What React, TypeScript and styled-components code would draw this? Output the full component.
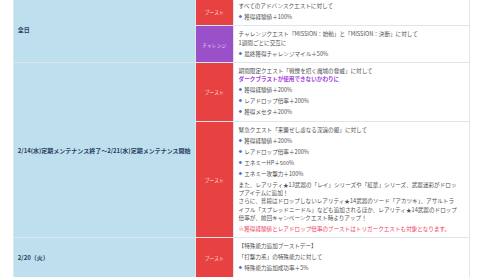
import { FC, ReactNode } from 'react'
import styled, { createGlobalStyle } from 'styled-components'

type Kind = 'boost' | 'challenge'

const GlobalStyle = createGlobalStyle`
  html, body {
    margin: 0;
    padding: 0;
    background: #fff;
    overflow: hidden;
  }
  body {
    font-family: "Noto Sans CJK JP", "Noto Sans", sans-serif;
  }
`

// whole page is drawn at 1/2.5 scale, like the shrunk screenshot
const Page = styled.div`
  zoom: 0.4;
  width: 1200px;
  padding-left: 32px;
  margin-top: -8px;
`

const Table = styled.table`
  width: 1140px;
  table-layout: fixed;
  border-collapse: collapse;

  td {
    border: 3px solid #dfe6ee;
  }
`

const Col = styled.col<{ $w: number }>`
  width: ${(p) => p.$w}px;
`

const DateCell = styled.td`
  background: #bee0ee;
  color: #2b3d5e;
  font-size: 15px;
  font-weight: bold;
  padding: 0 10px;
  vertical-align: middle;
`

const TagCell = styled.td<{ $kind: Kind }>`
  background: ${(p) => (p.$kind === 'boost' ? '#e84142' : '#9a50c9')};
  color: ${(p) => (p.$kind === 'boost' ? '#ffe1e4' : '#eadcf6')};
  font-size: 12px;
  padding: 0;
  text-align: center;
  vertical-align: middle;
  white-space: nowrap;
`

const Detail = styled.td`
  background: #fff;
  color: #505050;
  font-size: 14px;
  line-height: 21px;
  padding: 10px 24px 10px 12px;
  vertical-align: top;
`

const Text = styled.p<{ $gap?: number }>`
  margin: ${(p) => p.$gap ?? 0}px 0 0;
`

const Accent = styled.p`
  margin: 0;
  color: #a23de0;
  font-weight: bold;
`

const Note = styled.p`
  margin: 5px 0 0;
  color: #ee3f60;
`

const List = styled.ul`
  margin: 0;
  padding: 0;
  list-style: none;
`

const Item = styled.li<{ $gap?: number }>`
  margin-top: ${(p) => p.$gap ?? 6.5}px;
  display: flex;
  align-items: center;

  &::before {
    content: '◆';
    color: #4a6fd8;
    font-size: 9px;
    margin-right: 5px;
  }
`

const Tag: FC<{ kind: Kind }> = ({ kind }) => (
  <TagCell $kind={kind}>{kind === 'boost' ? 'ブースト' : 'チャレンジ'}</TagCell>
)

const Bullets: FC<{ items: string[]; gap?: number }> = ({ items, gap }) => (
  <List>
    {items.map((t) => (
      <Item key={t} $gap={gap}>
        {t}
      </Item>
    ))}
  </List>
)

const Row: FC<{ children: ReactNode }> = ({ children }) => <tr>{children}</tr>

const App: FC = () => (
  <>
    <GlobalStyle />
    <Page>
      <Table>
        <colgroup>
          <Col $w={455} />
          <Col $w={95} />
          <Col $w={590} />
        </colgroup>
        <tbody>
          <Row>
            <DateCell rowSpan={2}>全日</DateCell>
            <Tag kind="boost" />
            <Detail>
              <Text>すべてのアドバンスクエストに対して</Text>
              <Bullets items={['獲得経験値＋100%']} />
            </Detail>
          </Row>
          <Row>
            <Tag kind="challenge" />
            <Detail>
              <Text>
                チャレンジクエスト「MISSION：始動」と「MISSION：決断」に対して
                <br />
                1週間ごとに交互に
              </Text>
              <Bullets items={['最終獲得チャレンジマイル＋50%']} />
            </Detail>
          </Row>
          <Row>
            <DateCell rowSpan={2}>2/14(水)定期メンテナンス終了～2/21(水)定期メンテナンス開始</DateCell>
            <Tag kind="boost" />
            <Detail>
              <Text>期間限定クエスト「戦慄を招く魔城の脅威」に対して</Text>
              <Accent>ダークブラストが使用できないかわりに</Accent>
              <Bullets items={['獲得経験値＋200%', 'レアドロップ倍率＋200%', '獲得メセタ＋200%']} />
            </Detail>
          </Row>
          <Row>
            <Tag kind="boost" />
            <Detail>
              <Text>緊急クエスト「来襲せし虚なる深遠の躯」に対して</Text>
              <Bullets items={['獲得経験値＋200%', 'レアドロップ倍率＋200%', 'エネミーHP＋500%', 'エネミー攻撃力＋100%']} />
              <Text $gap={6}>
                また、レアリティ★13武器の「レイ」シリーズや「紅葉」シリーズ、武器迷彩がドロップアイテムに追加！
                <br />
                さらに、普段はドロップしないレアリティ★14武器のソード「アカツキ」、アサルトライフル「スプレッドニードル」なども追加されるほか、レアリティ★14武器のドロップ倍率が、前回キャンペーンクエスト時よりアップ！
              </Text>
              <Note>※獲得経験値とレアドロップ倍率のブーストはトリガークエストも対象となります。</Note>
            </Detail>
          </Row>
          <Row>
            <DateCell>2/20（火）</DateCell>
            <Tag kind="boost" />
            <Detail>
              <Text>【特殊能力追加ブーストデー】</Text>
              <Text $gap={7}>「打撃力系」の特殊能力に対して</Text>
              <Bullets items={['特殊能力追加成功率＋5%']} gap={7} />
            </Detail>
          </Row>
        </tbody>
      </Table>
    </Page>
  </>
)

export default App
